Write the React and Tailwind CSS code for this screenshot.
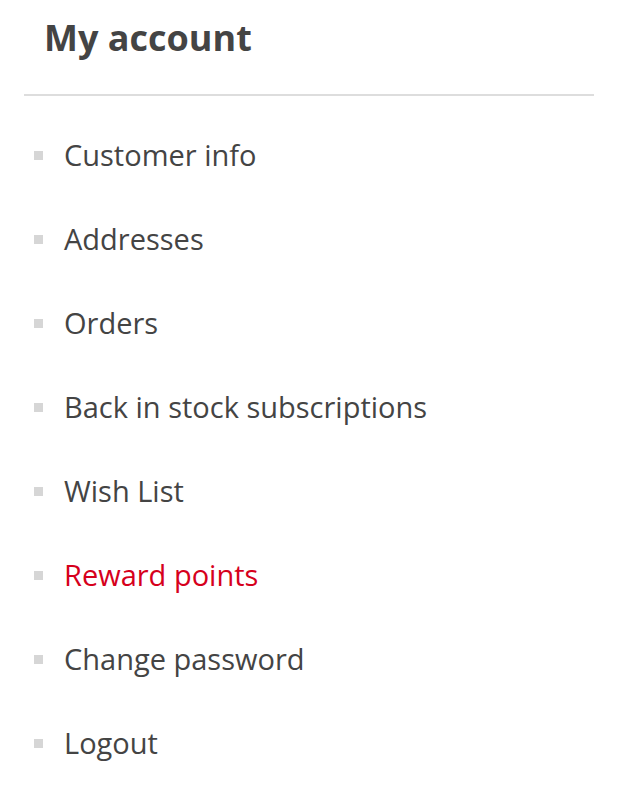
export default function App() {
  const items = [
    "Customer info",
    "Addresses",
    "Orders",
    "Back in stock subscriptions",
    "Wish List",
    "Reward points",
    "Change password",
    "Logout",
  ];
  return (
    <div className="w-[628px] h-[810px] bg-white pl-6 pr-[34px]" style={{ fontFamily: '"Open Sans", "Noto Sans", sans-serif' }}>
      <div className="h-[96px] border-b-2 border-[#dddddd] pl-[20px] pt-[13px]">
        <h1 className="text-[36px] font-bold text-[#444444] leading-[50px]">My account</h1>
      </div>
      <ul className="pt-[17px]">
        {items.map((t) => (
          <li key={t} className="h-[84px] flex items-center pl-[10px]">
            <span className="w-[9px] h-[9px] bg-[#d6d6d6] mr-[21px] shrink-0"></span>
            <span className={"text-[29px] " + (t === "Reward points" ? "text-[#d6001c]" : "text-[#444444]")}>{t}</span>
          </li>
        ))}
      </ul>
    </div>
  );
}
